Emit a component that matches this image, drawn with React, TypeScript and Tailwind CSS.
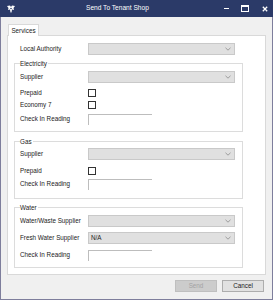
import React from "react"

const font = { fontFamily: '"Liberation Sans", Arial, sans-serif' }

function Chevron() {
  return (
    <svg width="6" height="4" viewBox="0 0 6 4" className="text-[#8a8a8a]">
      <path d="M0.5 0.8 L3 3.2 L5.5 0.8" fill="none" stroke="currentColor" strokeWidth="0.8" />
    </svg>
  )
}

function Combo({ value = "" }: { value?: string }) {
  return (
    <div className="w-[147px] h-[12px] bg-[#e0e0e0] border border-[#c9c9c9] flex items-center justify-between pl-[2px] pr-[3px] text-[6.3px] text-[#222]">
      <span>{value}</span>
      <Chevron />
    </div>
  )
}

function Checkbox() {
  return <div className="w-[8px] h-[8px] bg-white border border-[#333]" />
}

function TextBox() {
  return <div className="w-[64px] h-[11px] bg-white border-t border-l border-[#bdbdbd]" />
}

function Row({
  label,
  children,
  h,
  mt,
  top = false,
}: {
  label: string
  children: React.ReactNode
  h: number
  mt: number
  top?: boolean
}) {
  return (
    <div className="flex items-center" style={{ height: h, marginTop: mt }}>
      <div
        className={
          top
            ? "w-[80px] pl-[12px] text-[6.3px] text-[#1a1a1a] leading-none"
            : "w-[73px] pl-[5px] text-[6.3px] text-[#1a1a1a] leading-none"
        }
      >
        {label}
      </div>
      {children}
    </div>
  )
}

function Group({
  title,
  mt,
  pb,
  children,
}: {
  title: string
  mt: number
  pb: number
  children: React.ReactNode
}) {
  return (
    <div
      className="relative ml-[6px] w-[229px] border border-[#dcdcdc]"
      style={{ marginTop: mt, paddingBottom: pb }}
    >
      <span className="absolute left-[5px] -top-[4px] bg-white pr-px text-[6.3px] leading-[7px] text-[#1a1a1a]">
        {title}
      </span>
      {children}
    </div>
  )
}

export default function App() {
  return (
    <div className="w-[273px] h-[300px] flex flex-col bg-[#f0f0f0]" style={font}>
      {/* Title bar */}
      <div className="h-[17px] bg-[#2b3a68] flex items-center text-white shrink-0">
        <svg width="8" height="8" viewBox="0 0 8 8" className="ml-[7px]">
          <path d="M0 1 L3 0.5 L4 2 L5 0.5 L8 1 L6.5 3 L7 5 L5 4.5 L4.5 7.5 L3.5 7.5 L3 4.5 L1 5 L1.5 3 Z" fill="white" />
          <circle cx="4" cy="3.5" r="0.8" fill="#2b3a68" />
        </svg>
        <div className="ml-[71px] text-[6.6px] leading-none">Send To Tenant Shop</div>
        <div className="ml-auto flex items-center">
          <div className="w-[5px] h-px bg-white" />
          <div className="ml-[12px] w-[8px] h-[7px] border border-white border-t-2" />
          <svg width="6" height="6" viewBox="0 0 6 6" className="ml-[13px] mr-[5px]">
            <path d="M0.8 0.8 L5.2 5.2 M5.2 0.8 L0.8 5.2" stroke="white" strokeWidth="1.3" />
          </svg>
        </div>
      </div>

      {/* Body */}
      <div className="flex-1 flex flex-col border-x border-b border-[#7e7e9c]">
        <div className="mt-[7px] ml-[7px] relative z-10 -mb-px w-[31px] h-[12px] bg-white border-t border-x border-[#d9d9d9] flex items-center justify-center text-[6.3px] text-[#1a1a1a]">
          Services
        </div>
        <div className="ml-[6px] w-[259px] h-[240px] bg-white border border-[#d9d9d9] flex flex-col">
          <Row label="Local Authority" h={12} mt={7} top>
            <Combo />
          </Row>

          <Group title="Electricity" mt={8} pb={6}>
            <Row label="Supplier" h={12} mt={7}>
              <Combo />
            </Row>
            <Row label="Prepaid" h={8} mt={6}>
              <Checkbox />
            </Row>
            <Row label="Economy 7" h={8} mt={4}>
              <Checkbox />
            </Row>
            <Row label="Check In Reading" h={11} mt={5}>
              <TextBox />
            </Row>
          </Group>

          <Group title="Gas" mt={9} pb={8}>
            <Row label="Supplier" h={12} mt={6}>
              <Combo />
            </Row>
            <Row label="Prepaid" h={8} mt={7}>
              <Checkbox />
            </Row>
            <Row label="Check In Reading" h={11} mt={4}>
              <TextBox />
            </Row>
          </Group>

          <Group title="Water" mt={8} pb={6}>
            <Row label="Water/Waste Supplier" h={12} mt={7}>
              <Combo />
            </Row>
            <Row label="Fresh Water Supplier" h={12} mt={5}>
              <Combo value="N/A" />
            </Row>
            <Row label="Check In Reading" h={11} mt={6}>
              <TextBox />
            </Row>
          </Group>
        </div>

        <div className="mt-[5px] flex justify-end gap-[5px] pr-[8px]">
          <div className="w-[42px] h-[12px] bg-[#cccccc] border border-[#bfbfbf] flex items-center justify-center text-[6.3px] text-[#a3a3a3]">
            Send
          </div>
          <div className="w-[42px] h-[12px] bg-[#e1e1e1] border border-[#adadad] flex items-center justify-center text-[6.3px] text-[#1a1a1a]">
            Cancel
          </div>
        </div>
      </div>
    </div>
  )
}
